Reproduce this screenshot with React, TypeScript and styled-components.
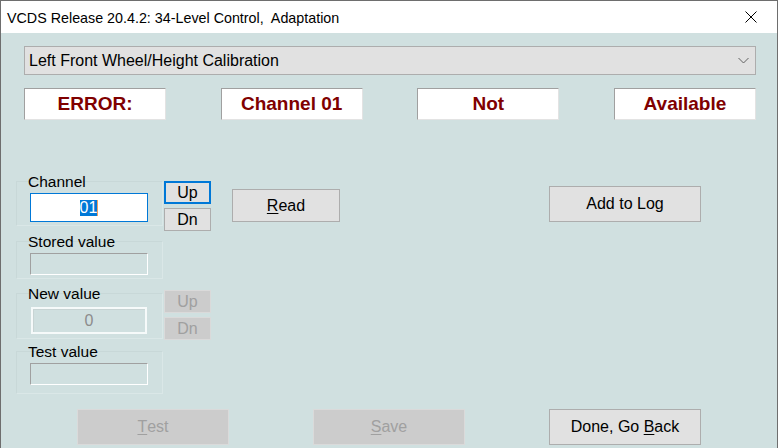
import React from "react";
import styled, { createGlobalStyle, css } from "styled-components";

const GlobalStyle = createGlobalStyle`
  html, body {
    margin: 0;
    padding: 0;
    background: #ffffff;
  }
  * {
    box-sizing: border-box;
  }
`;

const Window = styled.div`
  width: 778px;
  height: 448px;
  display: flex;
  flex-direction: column;
  border: 1px solid #6e6e6e;
  border-bottom: none;
  overflow: hidden;
  font-family: "Liberation Sans", Arial, sans-serif;
  color: #000;
`;

const TitleBar = styled.div`
  height: 32px;
  flex: none;
  display: flex;
  align-items: center;
  justify-content: space-between;
  background: #ffffff;
  padding-left: 6px;
`;

const Title = styled.span`
  font-size: 14.3px;
  white-space: pre;
  padding-top: 1px;
`;

const Close = styled.div`
  width: 40px;
  height: 32px;
  margin-right: 6px;
  display: flex;
  align-items: center;
  justify-content: center;
`;

const Body = styled.div`
  flex: 1;
  display: flex;
  flex-direction: column;
  background: #d0e0e0;
`;

const Combo = styled.div`
  margin: 13px 21px 0 23px;
  height: 29px;
  display: flex;
  align-items: center;
  justify-content: space-between;
  padding: 0 6px 0 4px;
  background: #e1e1e1;
  border: 1px solid #adadad;
  font-size: 16px;
`;

const StatusRow = styled.div`
  margin: 13px 21px 0 23px;
  display: flex;
  justify-content: space-between;
`;

const StatusBox = styled.div`
  width: 142px;
  height: 32px;
  display: flex;
  align-items: center;
  justify-content: center;
  background: #ffffff;
  border-top: 1px solid #a0a0a0;
  border-left: 1px solid #a0a0a0;
  border-right: 1px solid #e3e3e3;
  border-bottom: 1px solid #e3e3e3;
  color: #800000;
  font-weight: bold;
  font-size: 19px;
`;

const Main = styled.div`
  display: flex;
  align-items: flex-start;
`;

const FieldColumn = styled.div`
  margin-left: 15px;
  width: 147px;
  display: flex;
  flex-direction: column;
`;

// faint group frames, barely visible on the teal background
const Frame = styled.div<{ $mt: number; $pb: number }>`
  margin-top: ${(p) => p.$mt}px;
  padding-bottom: ${(p) => p.$pb}px;
  border: 1px solid #c8d8d8;
  border-right-color: #dae7e7;
  border-bottom-color: #dae7e7;
`;

const Label = styled.div`
  margin: -9px 0 0 11px;
  height: 18px;
  line-height: 18px;
  font-size: 15.5px;
`;

const TextBox = styled.div<{
  $h: number;
  $variant: "focus" | "sunken" | "raised";
  $gap?: number;
}>`
  margin: ${(p) => p.$gap ?? 2}px 0 0 13px;
  width: 118px;
  height: ${(p) => p.$h}px;
  display: flex;
  align-items: center;
  justify-content: center;
  font-size: 16px;
  ${(p) =>
    p.$variant === "focus" &&
    css`
      background: #ffffff;
      border: 1px solid #0078d7;
    `}
  ${(p) =>
    p.$variant === "sunken" &&
    css`
      background: #d0e0e0;
      border-top: 1px solid #a0a0a0;
      border-left: 1px solid #a0a0a0;
      border-right: 1px solid #ffffff;
      border-bottom: 1px solid #ffffff;
    `}
  ${(p) =>
    p.$variant === "raised" &&
    css`
      margin-left: 14px;
      width: 116px;
      background: #d0e0e0;
      border: 2px solid #f6fafa;
      box-shadow: inset 1px 1px 0 #c8d4d4;
      color: #8c8c8c;
    `}
`;

const Selected = styled.span`
  background: #0078d7;
  color: #ffffff;
  line-height: 16px;
  border-right: 1px solid #f0a060;
`;

const SpinColumn = styled.div`
  margin-left: 1px;
  width: 47px;
  display: flex;
  flex-direction: column;
`;

const SpinPair = styled.div<{ $mt: number }>`
  margin-top: ${(p) => p.$mt}px;
  display: flex;
  flex-direction: column;
  gap: 4px;
`;

const Button = styled.div<{
  $w: number;
  $h: number;
  $disabled?: boolean;
  $focused?: boolean;
  $ml?: number;
  $mt?: number;
}>`
  flex: none;
  width: ${(p) => p.$w}px;
  height: ${(p) => p.$h}px;
  margin-left: ${(p) => p.$ml ?? 0}px;
  margin-top: ${(p) => p.$mt ?? 0}px;
  display: flex;
  align-items: center;
  justify-content: center;
  font-size: 16px;
  background: #e1e1e1;
  border: 1px solid #adadad;
  ${(p) =>
    p.$focused &&
    css`
      border: 2px solid #0078d7;
    `}
  ${(p) =>
    p.$disabled &&
    css`
      background: #cccccc;
      border-color: #dadada;
      color: #a0a0a0;
    `}
`;

const Accel = styled.span`
  text-decoration: underline;
  text-underline-offset: 2px;
`;

const BottomRow = styled.div`
  margin-top: auto;
  margin-bottom: 3px;
  padding-left: 76px;
  display: flex;
  gap: 84px;
`;

const Chevron = () => (
  <svg width="11" height="7" viewBox="0 0 11 7">
    <polyline points="0.5,1 5.5,6 10.5,1" fill="none" stroke="#606060" strokeWidth="1" />
  </svg>
);

const CloseIcon = () => (
  <svg width="12" height="12" viewBox="0 0 12 12">
    <path d="M0.5 0.5 L11.5 11.5 M11.5 0.5 L0.5 11.5" stroke="#000" strokeWidth="1" />
  </svg>
);

const App = () => {
  return (
    <>
      <GlobalStyle />
      <Window>
        <TitleBar>
          <Title>VCDS Release 20.4.2: 34-Level Control,  Adaptation</Title>
          <Close>
            <CloseIcon />
          </Close>
        </TitleBar>
        <Body>
          <Combo>
            <span>Left Front Wheel/Height Calibration</span>
            <Chevron />
          </Combo>

          <StatusRow>
            <StatusBox>ERROR:</StatusBox>
            <StatusBox>Channel 01</StatusBox>
            <StatusBox>Not</StatusBox>
            <StatusBox>Available</StatusBox>
          </StatusRow>

          <Main>
            <FieldColumn>
              <Frame $mt={61} $pb={3}>
                <Label>Channel</Label>
                <TextBox $h={29} $variant="focus">
                  <Selected>01</Selected>
                </TextBox>
              </Frame>
              <Frame $mt={15} $pb={3}>
                <Label>Stored value</Label>
                <TextBox $h={22} $variant="sunken" />
              </Frame>
              <Frame $mt={14} $pb={4}>
                <Label>New value</Label>
                <TextBox $h={27} $variant="raised" $gap={4}>
                  0
                </TextBox>
              </Frame>
              <Frame $mt={12} $pb={8}>
                <Label>Test value</Label>
                <TextBox $h={22} $variant="sunken" />
              </Frame>
            </FieldColumn>

            <SpinColumn>
              <SpinPair $mt={61}>
                <Button $w={47} $h={23} $focused>
                  Up
                </Button>
                <Button $w={47} $h={23}>
                  Dn
                </Button>
              </SpinPair>
              <SpinPair $mt={59}>
                <Button $w={47} $h={23} $disabled>
                  Up
                </Button>
                <Button $w={47} $h={23} $disabled>
                  Dn
                </Button>
              </SpinPair>
            </SpinColumn>

            <Button $w={108} $h={33} $ml={21} $mt={69}>
              <Accel>R</Accel>ead
            </Button>
            <Button $w={152} $h={36} $ml={209} $mt={66}>
              Add to Log
            </Button>
          </Main>

          <BottomRow>
            <Button $w={152} $h={36} $disabled>
              <Accel>T</Accel>est
            </Button>
            <Button $w={152} $h={36} $disabled>
              <Accel>S</Accel>ave
            </Button>
            <Button $w={152} $h={36}>
              Done, Go&nbsp;<Accel>B</Accel>ack
            </Button>
          </BottomRow>
        </Body>
      </Window>
    </>
  );
};

export default App;
